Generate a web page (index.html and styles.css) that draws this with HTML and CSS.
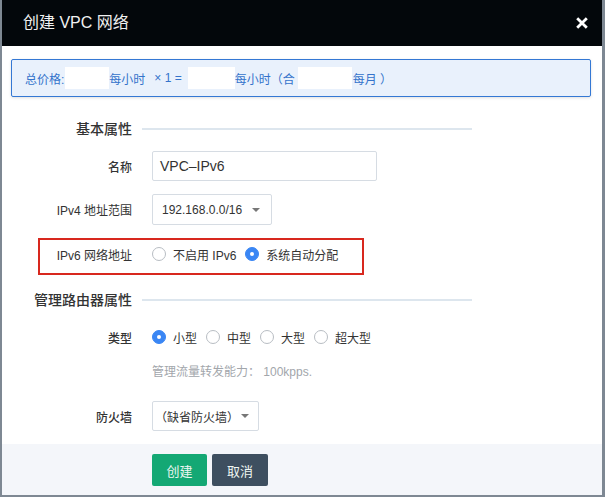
FILE: index.html
```html
<!DOCTYPE html>
<html lang="zh-CN">
<head>
<meta charset="utf-8">
<title>创建 VPC 网络</title>
<link rel="stylesheet" href="styles.css">
</head>
<body>
<div class="dialog">
  <header class="dlg-head">
    <h1 class="dlg-title">创建 VPC 网络</h1>
    <button class="dlg-close" aria-label="关闭">
      <svg width="12" height="12" viewBox="0 0 12 12"><path d="M1.2 1.2L10.8 10.8M10.8 1.2L1.2 10.8" stroke="#fff" stroke-width="2.8" fill="none"/></svg>
    </button>
  </header>
  <div class="dlg-body">
    <div class="price-bar">
      <span>总价格:</span><span class="slot slot-a"></span><span>每小时</span><span class="mult">× 1 =</span><span class="slot slot-b"></span><span>每小时（合</span><span class="slot slot-c"></span><span>每月 ）</span>
    </div>

    <div class="section sec-basic">
      <h2 class="section-title">基本属性</h2>
      <div class="section-rule"></div>
    </div>

    <div class="row row-name">
      <label class="row-label">名称</label>
      <div class="input">VPC–IPv6</div>
    </div>

    <div class="row row-ipv4">
      <label class="row-label">IPv4 地址范围</label>
      <div class="select select-cidr"><span>192.168.0.0/16</span><i class="caret"></i></div>
    </div>

    <div class="row row-ipv6">
      <label class="row-label">IPv6 网络地址</label>
      <div class="radios">
        <span class="opt opt-wide"><i class="radio"></i>不启用 IPv6</span>
        <span class="opt"><i class="radio on"></i>系统自动分配</span>
      </div>
    </div>

    <div class="section sec-router">
      <h2 class="section-title">管理路由器属性</h2>
      <div class="section-rule"></div>
    </div>

    <div class="row row-type">
      <label class="row-label">类型</label>
      <div class="radios">
        <span class="opt"><i class="radio on"></i>小型</span>
        <span class="opt"><i class="radio"></i>中型</span>
        <span class="opt"><i class="radio"></i>大型</span>
        <span class="opt"><i class="radio"></i>超大型</span>
      </div>
    </div>

    <div class="helper">管理流量转发能力： 100kpps.</div>

    <div class="row row-fw">
      <label class="row-label">防火墙</label>
      <div class="select select-fw"><span>（缺省防火墙）</span><i class="caret"></i></div>
    </div>
  </div>
  <footer class="dlg-foot">
    <button class="btn btn-primary">创建</button>
    <button class="btn btn-dark">取消</button>
  </footer>
</div>
</body>
</html>
```

FILE: styles.css
```css
* { box-sizing: border-box; }
html, body { margin: 0; padding: 0; }
body {
  background: #7e8893;
  font-family: "Liberation Sans", "Noto Sans CJK SC", sans-serif;
  color: #333;
  width: 605px;
  height: 497px;
  overflow: hidden;
}
.dialog {
  margin-left: 2px;
  width: 600px;
  height: 495px;
  background: #fff;
  display: flex;
  flex-direction: column;
}
.dlg-head {
  height: 46px;
  flex-shrink: 0;
  background: #03070b;
  display: flex;
  align-items: center;
  justify-content: space-between;
  padding: 0 14px 0 21px;
}
.dlg-title {
  margin: 0;
  font-size: 16px;
  font-weight: normal;
  color: #f1f1f1;
  line-height: 20px;
}
.dlg-close {
  background: none;
  border: 0;
  padding: 0;
  width: 12px;
  height: 12px;
  display: flex;
  margin-top: -1px;
}
.dlg-body {
  flex: 1;
  padding-top: 13px;
  display: flex;
  flex-direction: column;
}
.price-bar {
  margin: 0 11px 0 9px;
  height: 38px;
  border: 1px solid #3478d4;
  border-radius: 2px;
  background: #e9f1fc;
  box-shadow: 0 1px 3px rgba(0,0,0,0.12);
  display: flex;
  align-items: center;
  padding-left: 13px;
  font-size: 12px;
  color: #3473cb;
  white-space: pre;
}
.slot { display: inline-block; height: 22px; background: #fff; }
.slot-a { width: 44px; margin-left: 1px; }
.slot-b { width: 47px; margin-left: 6px; }
.slot-c { width: 54px; margin-left: 3px; margin-right: 1px; }
.mult { margin-left: 9px; }

.section {
  display: flex;
  align-items: center;
  height: 20px;
}
.sec-basic { margin-top: 22px; }
.sec-router { margin-top: 21px; }
.section-title {
  margin: 0;
  width: 130px;
  text-align: right;
  font-size: 14px;
  font-weight: 500;
  color: #333;
  line-height: 20px;
}
.section-rule {
  margin-left: 10px;
  width: 330px;
  height: 2px;
  background: #dde6ee;
}

.row {
  display: flex;
  align-items: center;
  position: relative;
}
.row-label {
  width: 130px;
  margin-right: 20px;
  flex-shrink: 0;
  text-align: right;
  font-size: 12px;
  font-weight: 500;
  color: #333;
}
.row-name { margin-top: 12px; height: 30px; }
.row-ipv4 { margin-top: 13px; height: 31px; }
.row-ipv6 { margin-top: 14px; height: 30px; }
.row-ipv6 .row-label { font-weight: normal; }
.row-ipv4 .row-label { font-weight: normal; }
.row-ipv6::after {
  content: "";
  position: absolute;
  left: 36px;
  top: -1px;
  width: 322px;
  height: 33px;
  border: 2px solid #d8281e;
}
.row-type { margin-top: 17px; height: 20px; }
.row-fw { margin-top: 19px; height: 30px; }

.input {
  width: 225px;
  height: 30px;
  border: 1px solid #d6dce3;
  border-radius: 2px;
  padding-left: 7px;
  display: flex;
  align-items: center;
  font-size: 14px;
  color: #333;
}
.select {
  height: 100%;
  border: 1px solid #d6dce3;
  border-radius: 2px;
  display: flex;
  align-items: center;
  color: #333;
}
.select-cidr { width: 120px; padding-left: 9px; padding-right: 11px; font-size: 12px; }
.select-fw { width: 107px; padding-left: 2px; padding-right: 9px; font-size: 12px; }
.caret {
  margin-left: auto;
  width: 0;
  height: 0;
  border-left: 4px solid transparent;
  border-right: 4px solid transparent;
  border-top: 4px solid #777;
}

.radios { display: flex; align-items: center; font-size: 12px; color: #333; }
.opt { display: flex; align-items: center; margin-right: 9px; }
.opt-wide { margin-right: 9px; }
.radio {
  width: 14px;
  height: 14px;
  border-radius: 50%;
  border: 1px solid #b8bdc3;
  background: #fff;
  margin-right: 7px;
  position: relative;
  flex-shrink: 0;
}
.radio.on {
  background: #3a86f4;
  border-color: #3a86f4;
}
.radio.on::after {
  content: "";
  position: absolute;
  left: 4px;
  top: 4px;
  width: 4px;
  height: 4px;
  border-radius: 50%;
  background: #fff;
}

.helper {
  margin-top: 15px;
  height: 20px;
  line-height: 20px;
  padding-left: 150px;
  font-size: 12px;
  color: #a2a6ab;
}

.dlg-foot {
  height: 51px;
  flex-shrink: 0;
  background: #f4f6fa;
  margin-top: 13px;
  padding: 10px 0 0 150px;
  display: flex;
  align-items: flex-start;
  gap: 5px;
}
.btn {
  height: 32px;
  border: 0;
  border-radius: 2px;
  font-family: "Liberation Sans", "Noto Sans CJK SC", sans-serif;
  font-size: 13px;
  color: #eef6f2;
  padding: 0;
}
.btn-primary { width: 55px; background: #14a874; }
.btn-dark { width: 56px; background: #3e4f60; }
```
